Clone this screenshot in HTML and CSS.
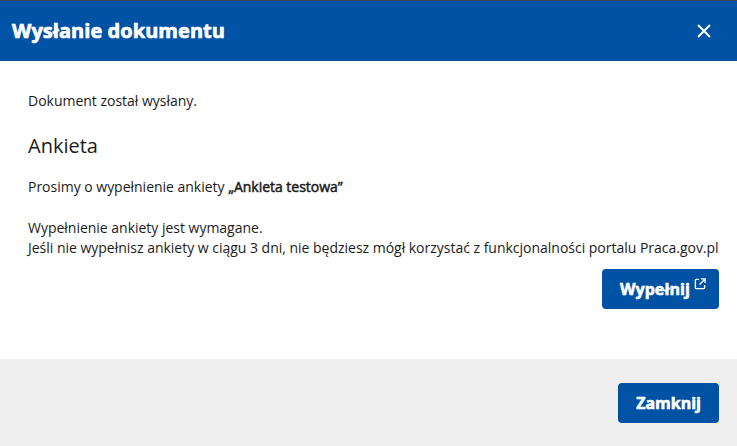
FILE: index.html
```html
<!DOCTYPE html>
<html lang="pl">
<head>
<meta charset="utf-8">
<title>Wysłanie dokumentu</title>
<link rel="stylesheet" href="styles.css">
</head>
<body>
<div class="dialog">
  <div class="topline"></div>
  <header class="head">
    <h1 class="title">Wysłanie dokumentu</h1>
    <button class="close" aria-label="Zamknij">
      <svg width="16" height="16" viewBox="0 0 16 16"><path d="M2 2 L14 14 M14 2 L2 14" stroke="#fff" stroke-width="2" fill="none"/></svg>
    </button>
  </header>
  <main class="body">
    <p class="sent">Dokument został wysłany.</p>
    <h2 class="survey">Ankieta</h2>
    <p class="ask">Prosimy o wypełnienie ankiety <strong>„Ankieta testowa”</strong></p>
    <p class="req">Wypełnienie ankiety jest wymagane.<br>Jeśli nie wypełnisz ankiety w ciągu 3 dni, nie będziesz mógł korzystać z funkcjonalności portalu Praca.gov.pl</p>
    <div class="actions">
      <button class="btn fill">Wypełnij<svg class="ext" width="12" height="12" viewBox="0 0 13 13"><path d="M5.500 1.500H2.500a1 1 0 0 0-1 1v8a1 1 0 0 0 1 1h8a1 1 0 0 0 1-1V7.500M7.500 1h4.500v4.500M12 1L6 7" stroke="#fff" stroke-width="1.500" fill="none"/></svg></button>
    </div>
  </main>
  <footer class="foot">
    <button class="btn">Zamknij</button>
  </footer>
</div>
</body>
</html>
```
FILE: styles.css
```css
* { box-sizing: border-box; }
html, body { margin: 0; padding: 0; }
body { width: 737px; height: 446px; overflow: hidden; background: #fff; font-family: "Open Sans", sans-serif; color: #1b1b1b; }
.dialog { display: flex; flex-direction: column; height: 446px; }
.topline { height: 1px; background: #3a4654; }
.head { height: 60px; background: #0052a5; display: flex; align-items: center; justify-content: space-between; padding: 0 25px 0 12px; }
.title { margin: 0; font-size: 20px; font-weight: 700; color: #fff; line-height: 60px; letter-spacing: 0.05px; -webkit-text-stroke: 0.7px #fff; }
.close { border: 0; background: none; padding: 0; display: flex; }
.body { flex: 1; padding: 30px 18px 0 28px; }
.sent { margin: 0; font-size: 14px; line-height: 20px; letter-spacing: -0.015px; }
.survey { margin: 21px 0 0; font-size: 20px; font-weight: 400; line-height: 28px; }
.ask { margin: 17px 0 0; font-size: 14px; line-height: 20px; letter-spacing: -0.015px; }
.ask strong { font-weight: 400; -webkit-text-stroke: 0.5px #1b1b1b; }
.req { margin: 21px 0 0; font-size: 14px; line-height: 20px; white-space: nowrap; letter-spacing: -0.015px; }
.actions { display: flex; justify-content: flex-end; margin-top: 11px; }
.btn { height: 40px; padding: 0 18px; background: #0052a5; color: #fff; border: 0; border-radius: 4px; font-family: "Open Sans", sans-serif; font-size: 16px; font-weight: 700; -webkit-text-stroke: 0.6px #fff; display: flex; align-items: center; }
.fill { padding-right: 13px; letter-spacing: 0.1px; }
.ext { margin: -11px 0 0 4px; }
.foot { height: 87px; background: #efefef; display: flex; justify-content: flex-end; align-items: flex-start; padding: 24px 18px 0 0; }
```
